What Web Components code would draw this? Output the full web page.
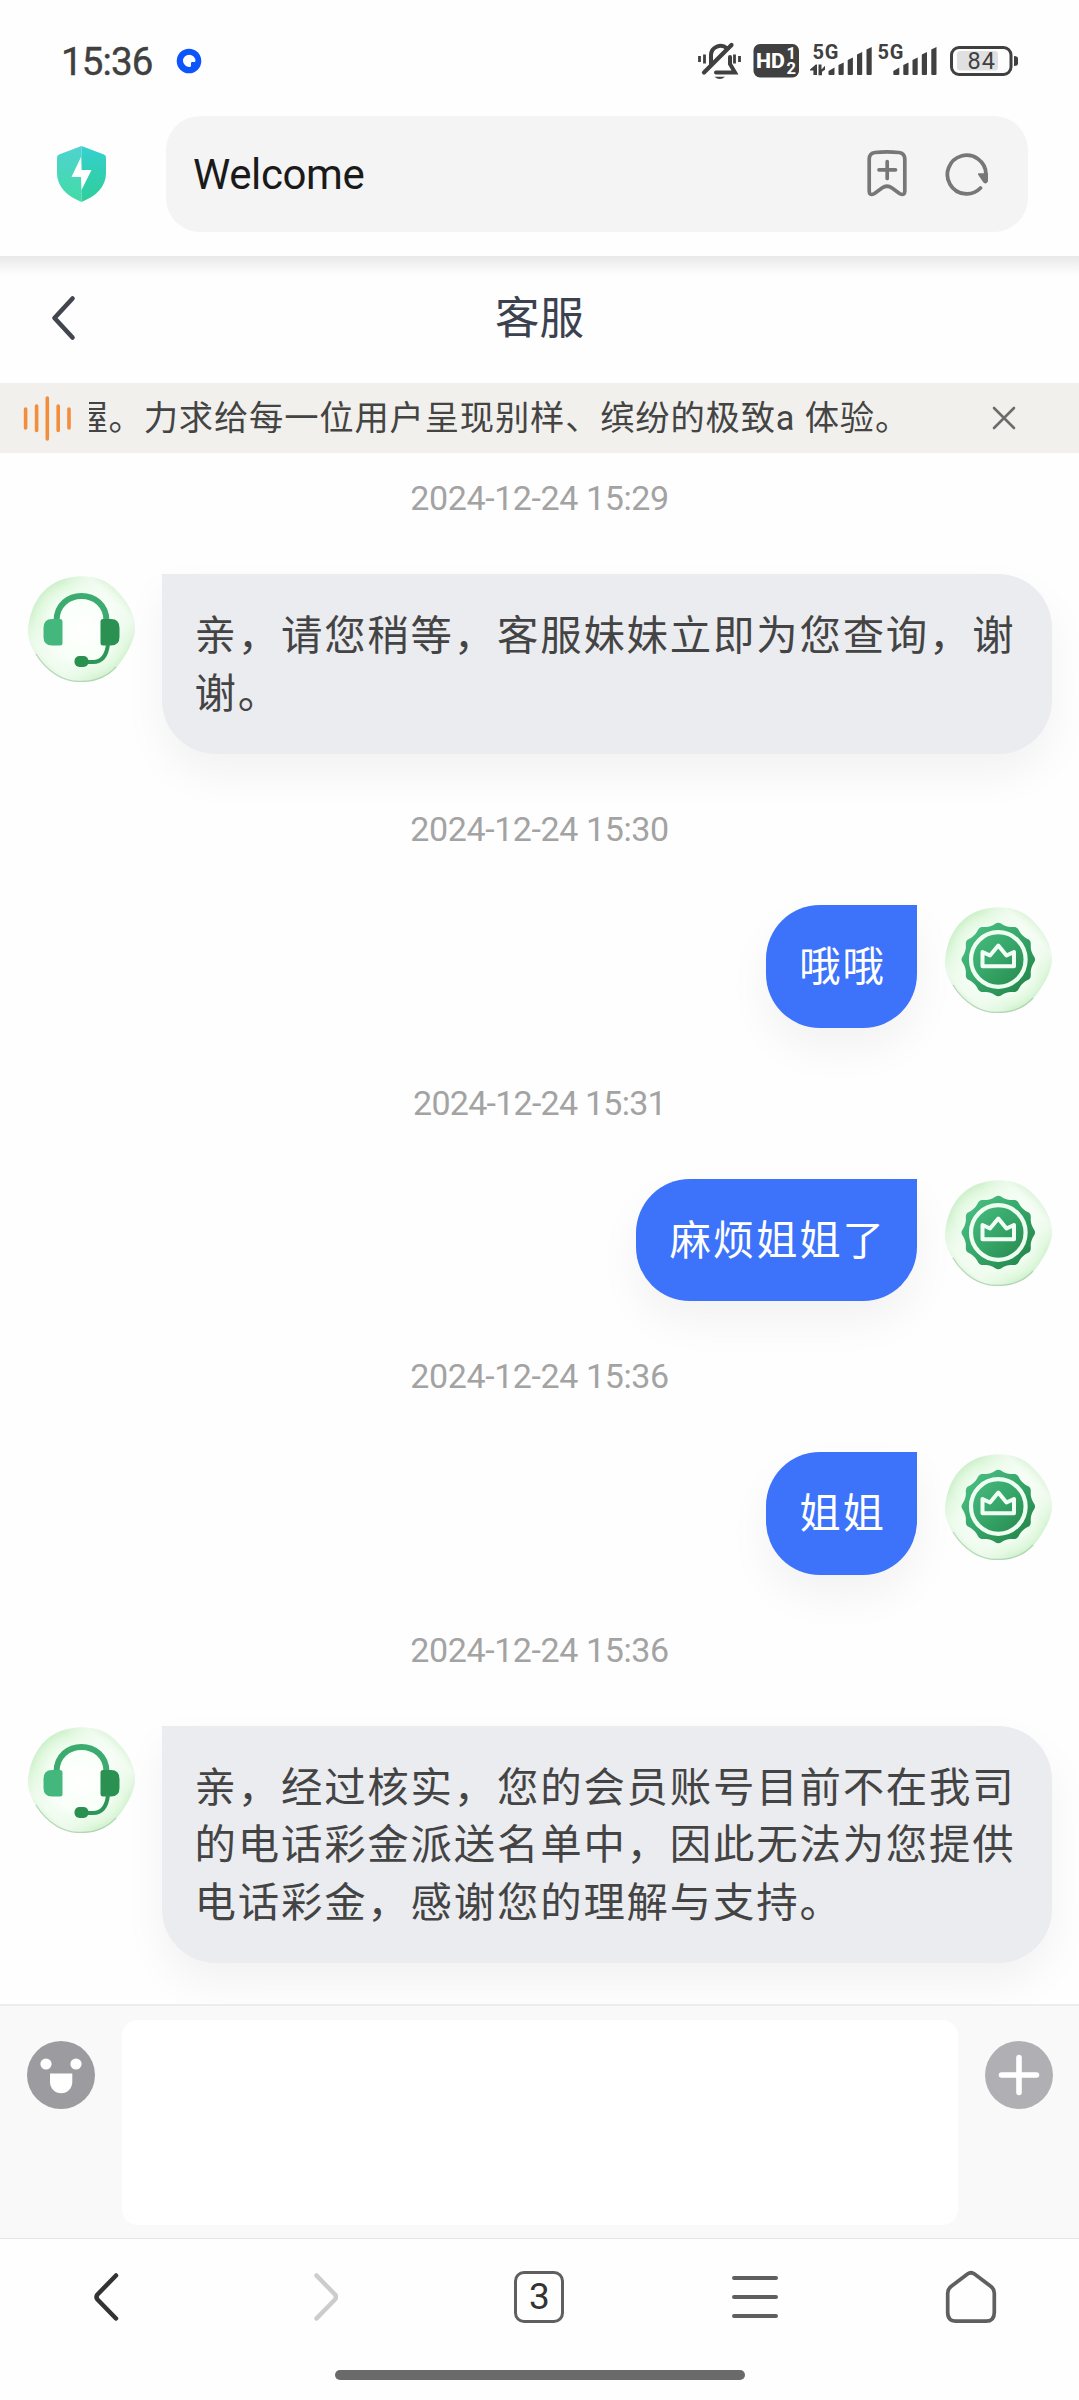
<!DOCTYPE html>
<html lang="zh-CN">
<head>
<meta charset="utf-8">
<title>客服</title>
<style>
html,body{margin:0;padding:0;background:#fefefe}
body{width:1079px;height:2400px;overflow:hidden;font-family:Roboto,"Noto Sans CJK SC",sans-serif}
</style>
</head>
<body>
<chat-screen></chat-screen>
<script>
const define = (name, css, html) => customElements.define(name, class extends HTMLElement {
  constructor() {
    super();
    this.attachShadow({ mode: 'open' }).innerHTML =
      `<style>:host{display:block;box-sizing:border-box}*{box-sizing:border-box}svg{display:block;flex:none}${css}</style>` +
      (typeof html === 'function' ? html(this) : html);
  }
});

define('status-bar', `
  :host{display:flex;align-items:center;height:116px;padding:6px 60px 0 61px;color:#404040}
  .clock{font-size:38.500px;font-weight:400;-webkit-text-stroke:.4px #404040;letter-spacing:-.9px;line-height:46px;width:112px;padding-top:2px}
  .right{margin-left:auto}`, `
  <span class="clock">15:36</span>
  <svg width="32" height="26" viewBox="0 0 32 26"><circle cx="16" cy="13" r="12.3" fill="#0b55fb"/><path d="M10 13a6.2 6.2 0 1 1 12.400 0q0 1-1 1h-2.200q-1.200 0-1.200 1.300v2.400q0 1.200-1.300 1.200A6.200 6.200 0 0 1 10 13z" fill="#fff"/></svg>
  <svg class="right" width="322" height="40" viewBox="697 41 322 40" fill="none" stroke="#404040" font-family="Roboto,sans-serif">
    <g stroke-width="4" stroke-linecap="round">
      <path d="M711 64V55a9.500 9.500 0 0 1 16-6.500M730 57v7l5 8.500H716"/>
      <path d="M704 72.500L731.500 45" stroke-width="4.200"/>
      <path d="M699.500 56v6M704.500 54.500v9M734.500 54.500v9M739.500 56v6" stroke-width="2.800" stroke-linecap="butt"/>
      <path d="M714.500 76.800h10.500q-5.200 4.500-10.500 0z" fill="#404040" stroke="none"/>
    </g>
    <rect x="753.500" y="44" width="45.500" height="33.500" rx="6.500" fill="#404040" stroke="none"/>
    <g fill="#fff" stroke="none">
      <text x="756" y="68" font-size="20.500" font-weight="800" textLength="29" lengthAdjust="spacingAndGlyphs">HD</text>
      <text x="786.500" y="59" font-size="16.500" font-weight="700">1</text>
      <text x="786.500" y="74" font-size="16.500" font-weight="700">2</text>
    </g>
    <g fill="#404040" stroke="none">
      <text x="812.500" y="59.200" font-size="20" font-weight="700" textLength="26">5G</text>
      <text x="877.500" y="59.200" font-size="20" font-weight="700" textLength="26">5G</text>
      <path d="M810 69.500l5.800-5h1.200V75h-3.600v-4.500H810zM818.500 64.500h3v5l3.500-3.800v4l-3 2v3.500h-3.500z"/>
      <g id="b"><path d="M828.500 71l6-3.500V74q0 1-1 1h-4q-1 0-1-1zM838.500 65l5.200-2.500V74q0 1-1 1h-3.200q-1 0-1-1zM847.700 60l5.200-2.500V74q0 1-1 1h-3.200q-1 0-1-1zM857 54.500l5.200-2.500V74q0 1-1 1h-3.200q-1 0-1-1zM866.500 49.500l5.200-2.500V74q0 1-1 1h-3.200q-1 0-1-1z"/></g>
      <use href="#b" x="64.800"/>
    </g>
    <rect x="951.500" y="47.500" width="59.500" height="27" rx="7.500" stroke-width="3"/>
    <rect x="957" y="51" width="41" height="19.500" rx="3" fill="#e0e0e0" stroke="none"/>
    <path d="M1014 56q4 0 4 2.500v5q0 2.500-4 2.500z" fill="#404040" stroke="none"/>
    <text x="967.500" y="69.300" font-size="23.500" fill="#404040" stroke="none" textLength="27.500">84</text>
  </svg>`);

define('address-bar', `
  :host{display:flex;align-items:center;height:140px;padding:0 51px 24px 57px}
  .field{margin-left:60px;flex:1;height:116px;border-radius:34px;background:#f4f4f4;display:flex;align-items:center;padding:0 39px 0 27px}
  .t{flex:1;font-size:42px;color:#1a1a1a;letter-spacing:-.4px;line-height:50px;padding-top:2px}
  .r{margin-left:37px}`, `
  <svg width="49" height="56" viewBox="0 0 49 56">
    <defs><linearGradient id="s" x1="0" y1="0" x2="0" y2="1"><stop offset="0" stop-color="#4fd3d0"/><stop offset="1" stop-color="#43dba5"/></linearGradient>
    <linearGradient id="s2" x1="0" y1="0" x2="0" y2="1"><stop offset="0" stop-color="#35d0cf"/><stop offset="1" stop-color="#2fce98"/></linearGradient></defs>
    <path d="M24.500 0L2 8.500Q0 9.500 0 11.500V27C0 41 10 50 24.500 56z" fill="url(#s)"/>
    <path d="M24.500 0L47 8.500Q49 9.500 49 11.500V27C49 41 39 50 24.500 56z" fill="url(#s2)"/>
    <path d="M24 11L14.500 31h9.500l.500 13L34.500 24H24.500z" fill="#fff"/>
  </svg>
  <div class="field"><span class="t">Welcome</span>
    <svg width="42" height="48" viewBox="0 0 42 48" fill="none" stroke="#777" stroke-width="3.700" stroke-linejoin="round" stroke-linecap="round">
      <path d="M9 2.500Q21 1.200 33 2.500Q38.600 3.200 38.800 9V40.500Q38.800 46.500 33.500 43.500L26 38Q21 34.500 16 38L8.500 43.500Q3.200 46.500 3.200 40.500V9Q3.400 3.200 9 2.500zM13 19.800h16.500M21.200 11.500v17"/></svg>
    <svg class="r" width="44" height="44" viewBox="0 0 44 44" fill="none" stroke="#777" stroke-width="3.800" stroke-linecap="round">
      <path d="M35.500 36A19.300 19.300 0 1 1 41 22"/><path d="M34 22.200h8v6.800q-1.500 3-3.500 0z" fill="#777" stroke-width="2" stroke-linejoin="round"/></svg>
  </div>`);

define('page-header', `
  :host{display:grid;grid-template-columns:80px 1fr 80px;align-items:center;height:127px;padding-bottom:3px;background:linear-gradient(#e8e8e8,#f4f4f4 10px,#fefefe 20px)}
  svg{margin-left:50px}
  h1{margin:0;text-align:center;font-size:44.500px;font-weight:400;color:#3c414f;line-height:60px;padding-top:2px}`, `
  <svg width="28" height="46" viewBox="0 0 28 46" fill="none" stroke="#41464f" stroke-width="4.600" stroke-linecap="round" stroke-linejoin="round"><path d="M22.500 3.500L4.500 23l18 19.500"/></svg>
  <h1><slot></slot></h1>`);

define('notice-bar', `
  :host{display:flex;align-items:center;height:70px;background:#f1f0ec;padding:0 62px 0 23px}
  .w{margin-left:17px;width:866px;overflow:hidden;display:flex}
  .t{margin-left:-15.500px;white-space:nowrap;font-size:34.300px;letter-spacing:.820px;line-height:50px;color:#444}
  .x{margin-left:auto}`, `
  <svg width="49" height="48" viewBox="0 0 49 48" stroke="#f28d3e" stroke-width="3.600" stroke-linecap="round"><path d="M2.600 15v19M13.600 12v24.500M24.300 4v41M35.200 12v24.500M46 15v19"/></svg>
  <div class="w"><span class="t"><slot></slot></span></div>
  <svg class="x" width="26" height="26" viewBox="0 0 26 26" stroke="#6c6c6c" stroke-width="2.600" stroke-linecap="round"><path d="M3 3l20 20M23 3L3 23"/></svg>`);

define('time-stamp', `
  :host{flex:none;height:151.100px;display:flex;align-items:center;justify-content:center;font-size:34px;letter-spacing:-.4px;color:#a3a3a3;padding-bottom:1px}
  :host([tight]){letter-spacing:-.750px}`, `<slot></slot>`);

const blob = 'M51 .500C66 0 80 4 89 15C98 24 107 37 107 54C106 66 98 80 88 92C78 102 66 106 53 106C39 106 27 101 18 91C7 80 0 67 0 54C1 42 4 29 14 17C24 6 37 1 51 .500z';
const orb = `<defs>
  <radialGradient id="o" cx=".5" cy=".5" r=".53"><stop offset="0" stop-color="#fff"/><stop offset=".55" stop-color="#f8fff8"/><stop offset=".82" stop-color="#e0f8de"/><stop offset="1" stop-color="#c6edc4"/></radialGradient>
  <linearGradient id="sh" x1="1" y1="0" x2="0" y2="1"><stop offset=".08" stop-color="#fff" stop-opacity="0"/><stop offset=".22" stop-color="#fff" stop-opacity=".6"/><stop offset=".36" stop-color="#fff" stop-opacity="0"/><stop offset=".66" stop-color="#fff" stop-opacity="0"/><stop offset=".8" stop-color="#fff" stop-opacity=".55"/><stop offset=".94" stop-color="#fff" stop-opacity="0"/></linearGradient>
  <linearGradient id="g" x1="0" y1="0" x2="1" y2="1"><stop offset="0" stop-color="#4ec387"/><stop offset=".45" stop-color="#38a96c"/><stop offset="1" stop-color="#217f43"/></linearGradient></defs>
  <path d="${blob}" fill="url(#o)"/>
  <path d="${blob}" fill="url(#sh)"/>
  <path d="M8 78C19 96 36 106 53 105.500C67 105.500 79 101 88 91" fill="none" stroke="#9cc7a2" stroke-opacity=".65" stroke-width="1.300"/>`;

const headset = `<g>
  <path d="M28.500 46V45C28.500 11.500 78.500 11.500 78.500 45V46" fill="none" stroke="#3cab70" stroke-width="6"/>
  <path d="M24 43h8q2.500 0 2.500 2.500V67q0 2.500-2.500 2.500H24Q15.500 69.500 15.500 61V52Q15.500 43 24 43z" fill="#44b87c"/>
  <path d="M83 43h-8q-2.500 0-2.500 2.500V67q0 2.500 2.500 2.500h8Q91.500 69.500 91.500 61V52Q91.500 43 83 43z" fill="#2a9152"/>
  <path d="M80 68Q78 86 65 86H56" fill="none" stroke="#2b9657" stroke-width="4"/>
  <rect x="46.500" y="80" width="14" height="11" rx="5" fill="#29904f"/></g>`;

let seal = '';
for (let i = 0; i <= 144; i++) {
  const a = i / 144 * Math.PI * 2;
  const r = 35.3 + 1.3 * Math.cos(12 * a) + 0.2 * Math.cos(24 * a);
  seal += (i ? 'L' : 'M') + (53.3 + r * Math.sin(a)).toFixed(2) + ' ' + (52.500 - r * Math.cos(a)).toFixed(2);
}
const crown = `<path d="${seal}z" fill="url(#g)"/>
  <circle cx="53.300" cy="52.500" r="27.300" fill="none" stroke="#eefff2" stroke-width="4.200"/>
  <path d="M37.500 45L45 48.500L53.300 38.500L61.500 48.500L69 45V59.300H37.500z" fill="none" stroke="#f2fff5" stroke-width="4" stroke-linejoin="round"/>`;

define('chat-avatar', `:host{flex:none;width:107px;height:106px;margin-top:1.500px}`,
  el => `<svg width="107" height="106" viewBox="0 0 107 106">${orb}${el.getAttribute('kind') === 'agent' ? headset : crown}</svg>`);

define('chat-message', `
  :host{flex:none;display:flex;gap:27px;padding:0 27px 0 28px;align-items:flex-start}
  :host([from=user]){flex-direction:row-reverse;gap:28px}
  .b{padding:34px 30px 30.800px 32.500px;border-radius:0 54px 54px 54px;background:#ebecf0;color:#444;font-size:41.400px;letter-spacing:1.820px;line-height:57.600px;box-shadow:0 20px 44px rgba(0,0,0,.05);line-break:strict}
  :host([from=agent]) .b{flex:1}
  :host([from=user]) .b{border-radius:54px 0 54px 54px;background:#3d73fa;color:#fff;padding:34px 31.400px 30.800px 33.200px}`,
  el => `<chat-avatar kind="${el.getAttribute('from')}"></chat-avatar><div class="b"><slot></slot></div>`);

define('message-list', `
  :host{height:1550.500px;overflow:hidden;display:flex;flex-direction:column;justify-content:flex-end;padding-bottom:40.200px}`, `<slot></slot>`);

define('message-composer', `
  :host{display:flex;height:234px;border-top:2.500px solid #ebeeed;background:#f9f9f9;padding:14px 26.500px 12px 27px;gap:26.500px}
  .i{flex:1;background:#fff;border-radius:16px;height:205px}
  svg{margin-top:21px}`, `
  <svg width="68" height="68" viewBox="0 0 68 68"><circle cx="34" cy="34" r="34" fill="#9c9ca0"/><g fill="#fff"><circle cx="19" cy="23" r="5.600"/><circle cx="49" cy="23" r="5.600"/><path d="M23 32.500h22.300v8.500a11.150 11.150 0 0 1-22.300 0z"/></g></svg>
  <div class="i"></div>
  <svg width="68" height="68" viewBox="0 0 68 68"><circle cx="34" cy="34" r="34" fill="#b0b0b4"/><path d="M34 16.500v35M16.500 34h35" stroke="#fff" stroke-width="5.600" stroke-linecap="round"/></svg>`);

define('browser-nav', `
  :host{height:162.500px;border-top:1px solid #e4e4e4;background:#fefefe;display:flex;flex-direction:column;align-items:center}
  nav{height:116px;width:1079px;display:grid;grid-template-columns:repeat(5,1fr);align-items:center;justify-items:center}
  .n{width:50px;height:52px;border:3.500px solid #5f5f5f;border-radius:10px;display:flex;align-items:center;justify-content:center;font-size:37px;color:#333;line-height:40px}
  .bar{width:410px;height:10px;border-radius:5px;background:#6a6a6a;margin-top:15px}`, `
  <nav>
    <svg width="28" height="50" viewBox="2 0 28 50" fill="none" stroke="#333" stroke-width="4.500" stroke-linecap="round" stroke-linejoin="round"><path d="M23 3.500L4.500 22.500Q2.500 25 4.500 27.500L23 46.500" transform="translate(1 0)"/></svg>
    <svg width="28" height="50" viewBox="-2 0 28 50" fill="none" stroke="#ccc" stroke-width="4.500" stroke-linecap="round" stroke-linejoin="round"><path d="M3 3.500L21.500 22.500Q23.500 25 21.500 27.500L3 46.500" transform="translate(1.500 0)"/></svg>
    <div class="n">3</div>
    <svg width="46" height="44" viewBox="0 0 46 44" stroke="#5f5f5f" stroke-width="4" stroke-linecap="round"><path d="M2 3h42M2 22h42M2 41h42"/></svg>
    <svg width="52" height="54" viewBox="0 0 52 54" fill="none" stroke="#5f5f5f" stroke-width="3.700" stroke-linejoin="round"><path d="M22.500 4Q26 1.500 29.500 4L46 16.500Q49.300 19 49.300 23V42.500Q49.300 51.200 41 51.200H11Q2.700 51.200 2.700 42.500V23Q2.700 19 6 16.500z"/></svg>
  </nav>
  <div class="bar"></div>`);

define('chat-screen', `:host{width:1079px;height:2400px;overflow:hidden;background:#fefefe}`, `
  <status-bar></status-bar>
  <address-bar></address-bar>
  <page-header>客服</page-header>
  <notice-bar>握。力求给每一位用户呈现别样、缤纷的极致a 体验。</notice-bar>
  <message-list>
    <time-stamp>2024-12-24 15:29</time-stamp>
    <chat-message from="agent">亲，请您稍等，客服妹妹立即为您查询，谢谢。</chat-message>
    <time-stamp>2024-12-24 15:30</time-stamp>
    <chat-message from="user">哦哦</chat-message>
    <time-stamp tight>2024-12-24 15:31</time-stamp>
    <chat-message from="user">麻烦姐姐了</chat-message>
    <time-stamp>2024-12-24 15:36</time-stamp>
    <chat-message from="user">姐姐</chat-message>
    <time-stamp>2024-12-24 15:36</time-stamp>
    <chat-message from="agent">亲，经过核实，您的会员账号目前不在我司的电话彩金派送名单中，因此无法为您提供电话彩金，感谢您的理解与支持。</chat-message>
  </message-list>
  <message-composer></message-composer>
  <browser-nav></browser-nav>`);
</script>
</body>
</html>
